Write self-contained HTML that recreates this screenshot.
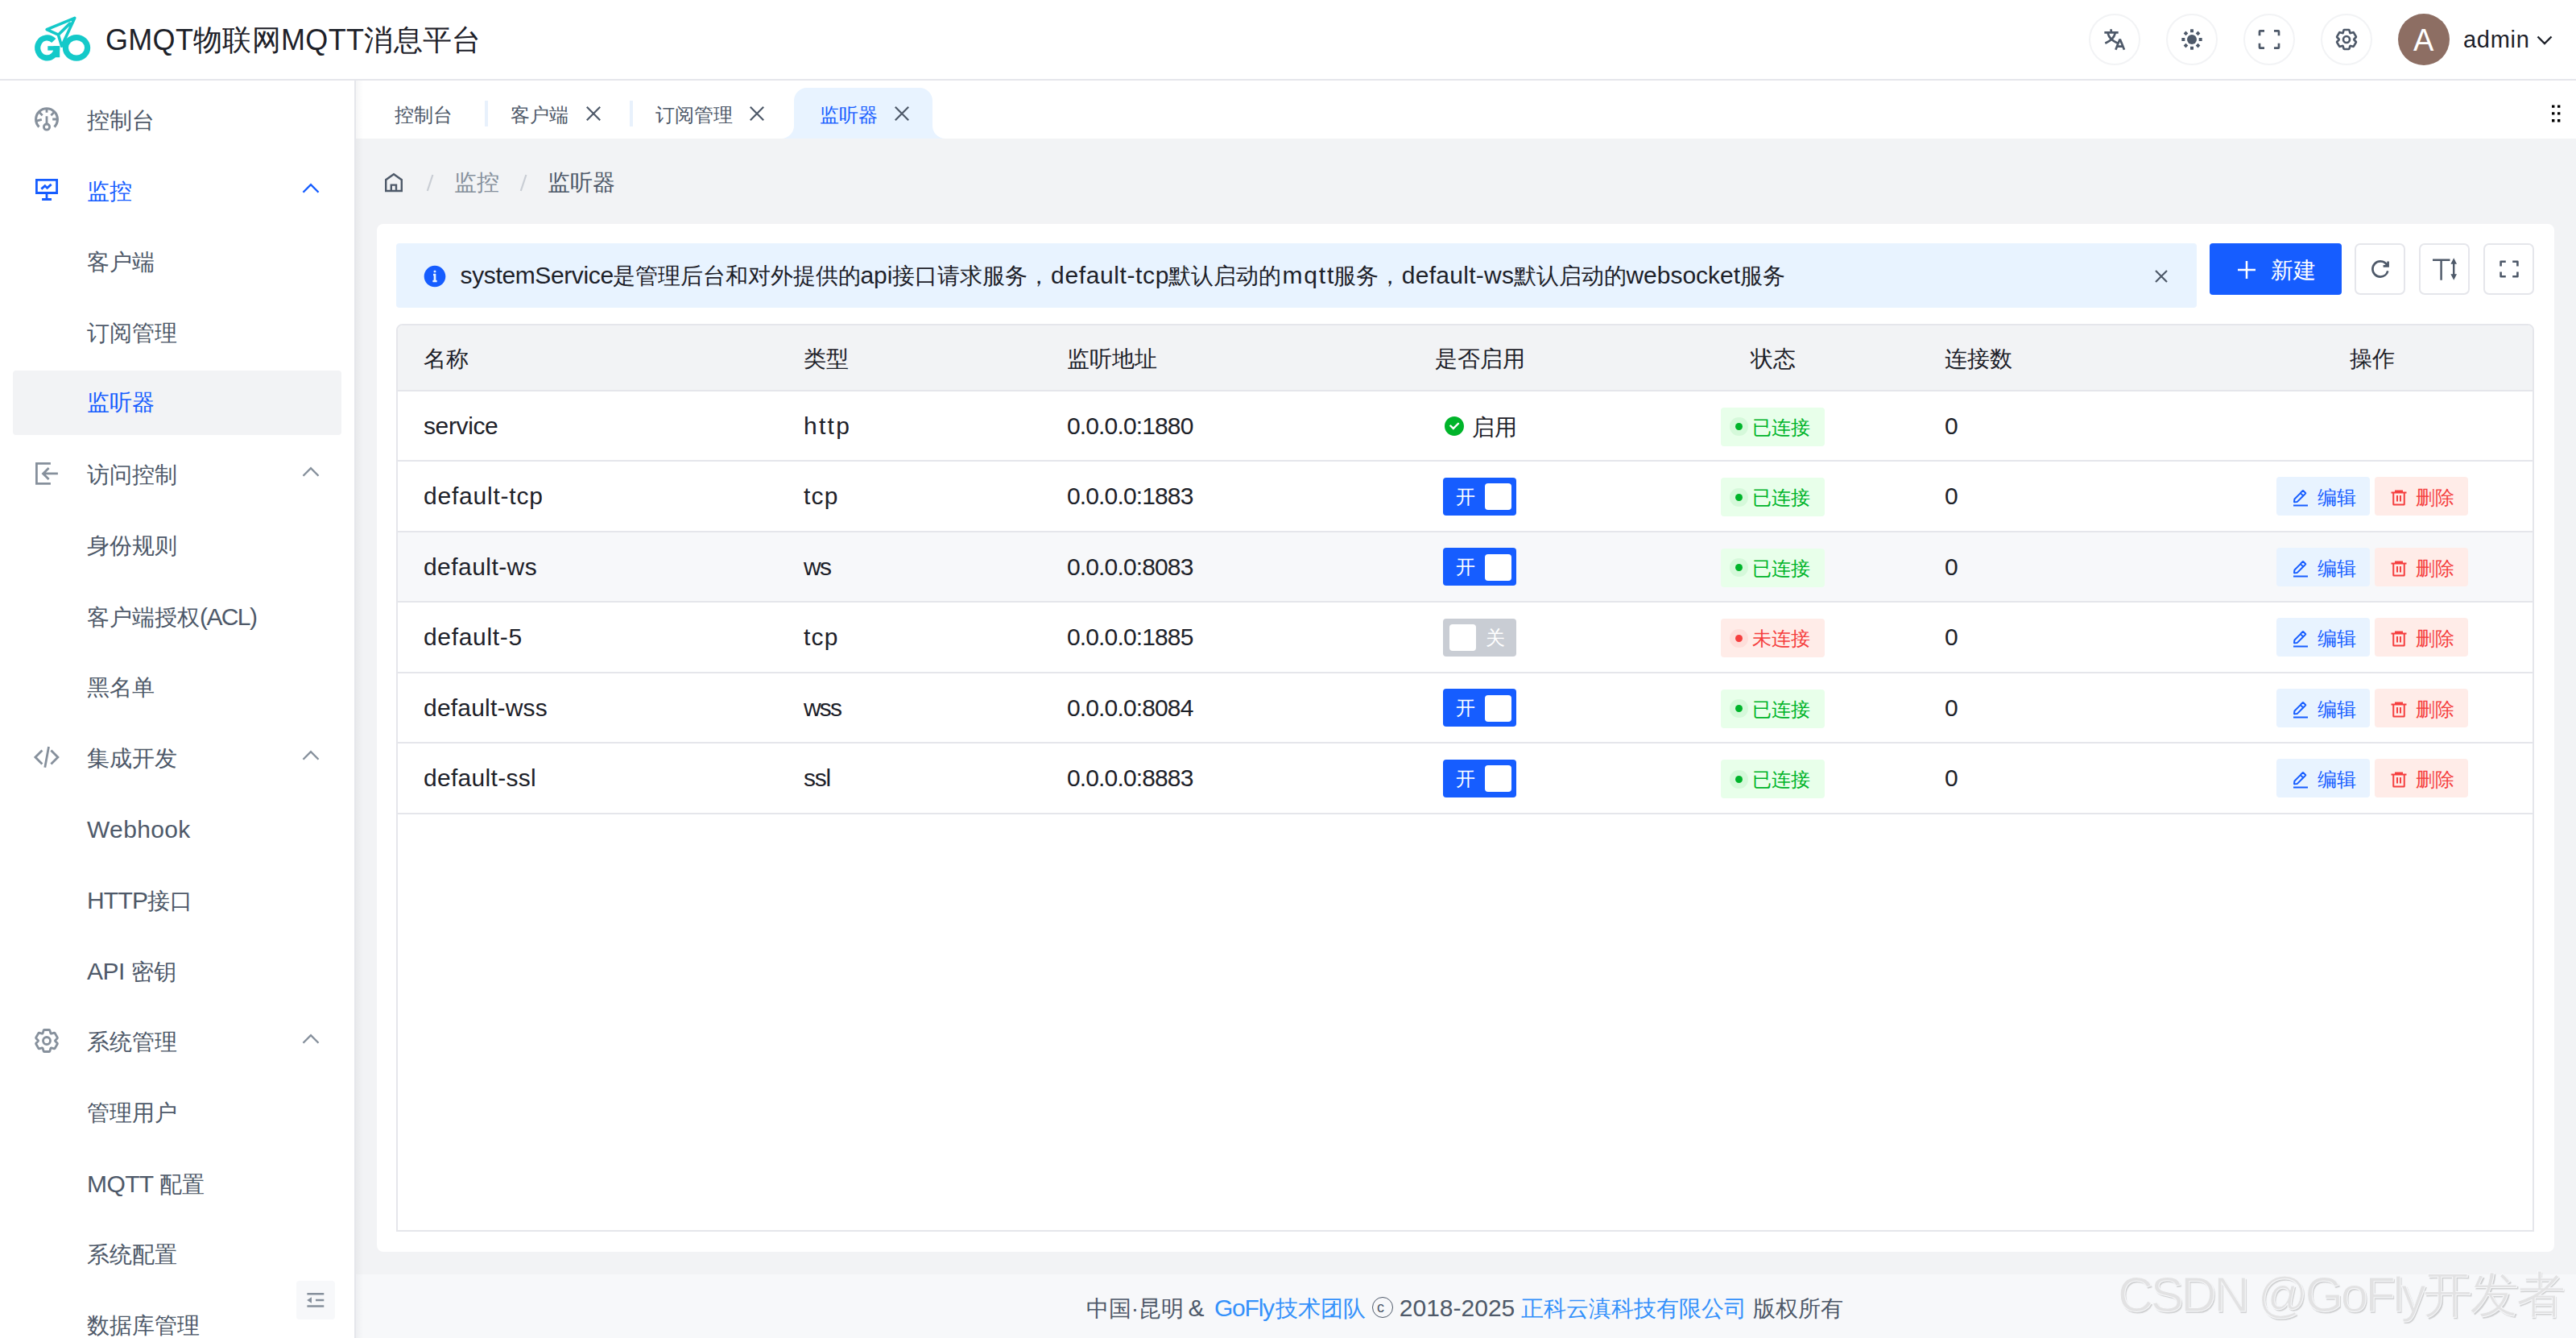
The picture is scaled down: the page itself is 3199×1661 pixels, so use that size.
<!DOCTYPE html>
<html><head><meta charset="utf-8">
<style>
*{box-sizing:border-box;margin:0;padding:0}
html,body{width:3199px;height:1661px;overflow:hidden;background:#fff}
body{position:relative;font-family:"Liberation Sans",sans-serif;color:#1D2129;font-size:28px}
.a{position:absolute}
.t{position:absolute;white-space:nowrap;line-height:1}
svg{position:absolute;overflow:visible}
.st{fill:none;stroke:currentColor}
/* header */
#hdr{left:0;top:0;width:3199px;height:100px;background:#fff;border-bottom:2px solid #E5E6EB}
.nbtn{position:absolute;top:17px;width:64px;height:64px;border-radius:50%;border:2px solid #F2F3F5;color:#4E5969}
/* sidebar */
#side{left:0;top:100px;width:442px;height:1561px;background:#fff;border-right:2px solid #E5E6EB;overflow:hidden}
.mi{position:absolute;left:16px;width:408px;height:80px;border-radius:4px}
.mt{position:absolute;left:92px;top:0;height:80px;line-height:80px;color:#4E5969;font-size:28px;white-space:nowrap}
.ic{color:#86909C}
/* main */
#main{left:442px;top:100px;width:2757px;height:1561px;background:#F2F3F5}
#tabs{left:0;top:0;width:2757px;height:72px;background:#fff}
.tab{position:absolute;top:30px;font-size:24px;color:#4E5969;line-height:1;white-space:nowrap}
#card{left:26px;top:178px;width:2704px;height:1275.5px;background:#fff;border-radius:8px}
#tbl{left:24px;top:124px;width:2655px;height:1127px;border:2px solid #E5E6EB;border-radius:8px 8px 0 0;overflow:hidden}
.row{position:absolute;left:0;width:2651px;border-bottom:2px solid #E5E6EB}
.cell{position:absolute;white-space:nowrap;font-size:28px;color:#1D2129}
.sw{position:absolute;left:1300px;width:91px;height:47px;border-radius:4px;background:#165DFF}
.sw .k{position:absolute;top:7.5px;width:33px;height:33px;border-radius:4px;background:#fff}
.sw .l{position:absolute;top:0;height:47px;line-height:47px;font-size:24px;color:#fff}
.tag{position:absolute;left:1644px;width:129px;height:48px;border-radius:4px;background:#E8FFEA;color:#00B42A;font-size:24px}
.tag .d{position:absolute;left:18px;top:19.5px;width:9px;height:9px;border-radius:50%;background:#00B42A;box-shadow:0 0 0 7px rgba(0,180,42,.08)}
.tag .l{position:absolute;left:39px;top:1px;height:48px;line-height:48px}
.eb{position:absolute;left:2334px;width:116px;height:48px;border-radius:4px;background:#E8F3FF;color:#165DFF;font-size:24px}
.db{position:absolute;left:2456px;width:116px;height:48px;border-radius:4px;background:#FFECE8;color:#F53F3F;font-size:24px}
.eb .l,.db .l{position:absolute;left:51px;top:2px;height:48px;line-height:48px}
#foot{left:0;top:1482px;width:2757px;height:79px;background:#F7F8FA}
</style></head><body>
<!-- HEADER -->
<div id="hdr" class="a">
  <svg class="a" style="left:0;top:0" width="130" height="98" viewBox="0 0 130 98">
    <g fill="none" stroke="#14C9C9" stroke-linejoin="round" stroke-linecap="round" stroke-width="3.6">
      <path d="M92.8 22.3 L58.1 36.6 L72.4 43.2 L76.6 57.2 Z M72.4 43.2 L86.8 29.1"/>
    </g>
    <g fill="none" stroke="#14C9C9" stroke-width="7.2">
      <ellipse cx="95" cy="59.3" rx="13.6" ry="12.8"/>
      <path d="M66.8 50.5 A11.8 12.5 0 1 0 70.3 59.3"/></g><g fill="#14C9C9"><rect x="59.3" y="57.2" width="14.9" height="5.4"/><rect x="66.4" y="57.2" width="7.8" height="14"/>
    </g>
  </svg>
  <div class="t" style="left:131px;top:32px;font-size:36px;letter-spacing:0.3px;color:#1D2129">GMQT物联网MQTT消息平台</div>
  <div class="nbtn" style="left:2594px"></div>
  <div class="nbtn" style="left:2690px"></div>
  <div class="nbtn" style="left:2786px"></div>
  <div class="nbtn" style="left:2882px"></div>
  <div class="a" style="left:2978px;top:17px;width:64px;height:64px;border-radius:50%;background:#8D6E63"></div>
  <div class="t" style="left:2997px;top:31px;font-size:38px;color:#fff">A</div>
  <div class="t" style="left:3059px;top:35px;font-size:29px;letter-spacing:0.7px;color:#1D2129">admin</div>
  <svg style="left:2610px;top:33px;color:#4E5969" width="32" height="32" viewBox="0 0 48 48"><g class="st" stroke-width="4"><path d="m42 43-2.385-6M26 43l2.384-6m11.231 0-.795-2-4.18-10h-1.28l-4.181 10-.795 2m11.231 0h-11.23M17 5l1 5M5 11h26M11 11s1.889 7.826 6.611 12.174C22.333 27.522 30 31 30 31"/><path d="M25.5 11s-1.889 7.826-6.611 12.174C14.167 27.522 6.5 31 6.5 31"/></g></svg>
  <svg style="left:2706px;top:33px" width="32" height="32" viewBox="0 0 48 48"><circle cx="24" cy="24" r="9" fill="#4E5969"/><path fill="#4E5969" d="M21 5.5a.5.5 0 0 1 .5-.5h5a.5.5 0 0 1 .5.5v5a.5.5 0 0 1-.5.5h-5a.5.5 0 0 1-.5-.5v-5ZM21 37.5a.5.5 0 0 1 .5-.5h5a.5.5 0 0 1 .5.5v5a.5.5 0 0 1-.5.5h-5a.5.5 0 0 1-.5-.5v-5ZM42.5 21a.5.5 0 0 1 .5.5v5a.5.5 0 0 1-.5.5h-5a.5.5 0 0 1-.5-.5v-5a.5.5 0 0 1 .5-.5h5ZM10.5 21a.5.5 0 0 1 .5.5v5a.5.5 0 0 1-.5.5h-5a.5.5 0 0 1-.5-.5v-5a.5.5 0 0 1 .5-.5h5ZM39.203 34.96a.5.5 0 0 1 0 .707l-3.536 3.536a.5.5 0 0 1-.707 0l-3.535-3.536a.5.5 0 0 1 0-.707l3.535-3.535a.5.5 0 0 1 .707 0l3.536 3.535ZM16.575 12.333a.5.5 0 0 1 0 .707l-3.535 3.535a.5.5 0 0 1-.707 0L8.797 13.04a.5.5 0 0 1 0-.707l3.536-3.536a.5.5 0 0 1 .707 0l3.535 3.536ZM13.04 39.203a.5.5 0 0 1-.707 0l-3.536-3.536a.5.5 0 0 1 0-.707l3.536-3.535a.5.5 0 0 1 .707 0l3.536 3.535a.5.5 0 0 1 0 .707l-3.536 3.536ZM35.668 16.575a.5.5 0 0 1-.708 0l-3.535-3.535a.5.5 0 0 1 0-.707l3.535-3.536a.5.5 0 0 1 .708 0l3.535 3.536a.5.5 0 0 1 0 .707l-3.535 3.535Z"/></svg>
  <svg style="left:2802px;top:33px;color:#4E5969" width="32" height="32" viewBox="0 0 48 48"><path class="st" stroke-width="4" d="M42 17V9a1 1 0 0 0-1-1h-8M6 17V9a1 1 0 0 1 1-1h8m27 23v8a1 1 0 0 1-1 1h-8M6 31v8a1 1 0 0 0 1 1h8"/></svg>
  <svg style="left:2898px;top:33px;color:#4E5969" width="32" height="32" viewBox="0 0 48 48"><g class="st" stroke-width="4"><path d="M18.797 6.732A1 1 0 0 1 19.76 6h8.48a1 1 0 0 1 .964.732l1.285 4.628a1 1 0 0 0 1.213.7l4.651-1.2a1 1 0 0 1 1.116.468l4.24 7.344a1 1 0 0 1-.153 1.2L38.193 23.3a1 1 0 0 0 0 1.402l3.364 3.427a1 1 0 0 1 .153 1.2l-4.24 7.344a1 1 0 0 1-1.116.468l-4.65-1.2a1 1 0 0 0-1.214.7l-1.285 4.628a1 1 0 0 1-.964.732h-8.48a1 1 0 0 1-.963-.732L17.51 36.64a1 1 0 0 0-1.213-.7l-4.65 1.2a1 1 0 0 1-1.116-.468l-4.24-7.344a1 1 0 0 1 .153-1.2L9.809 24.7a1 1 0 0 0 0-1.402l-3.364-3.427a1 1 0 0 1-.153-1.2l4.24-7.344a1 1 0 0 1 1.116-.468l4.65 1.2a1 1 0 0 0 1.213-.7l1.286-4.628Z"/><path d="M30 24a6 6 0 1 1-12 0 6 6 0 0 1 12 0Z"/></g></svg>
  <svg style="left:0;top:0;color:#1D2129" width="1" height="1"><path class="st" stroke-width="2.4" d="M3151.5 45.5 L3160 54 L3168.5 45.5"/></svg>
</div>
<!-- SIDEBAR -->
<div id="side" class="a">
<div class="mi" style="top:10px;"><div class="mt" style="color:#4E5969">控制台</div></div>
<svg style="left:58px;top:48px;color:#86909C" width="1" height="1"><g class="st" stroke-width="2.8" fill="none"><path stroke-width="3.1" d="M-9.55 9.55 A13.4 13.4 0 1 1 9.55 9.55"/><path d="M0 -12.5 V-8.2 M-9 -8.4 L-5.3 -4.8 M9 -8.4 L5.3 -4.8 M-12.5 2.2 L-6.2 0.3 M12.5 0 H7.2 M0 -3.8 V6"/><circle cx="0" cy="9.6" r="3.6"/></g></svg>
<div class="mi" style="top:98px;"><div class="mt" style="color:#165DFF">监控</div></div>
<svg style="left:58px;top:136px;color:#165DFF" width="1" height="1"><g class="st" stroke-width="2.8" fill="none"><path d="M-12.6 -12.7 H12.6 V3.5 H-12.6 Z"/><path d="M0 3.5 V11.5 M-5.9 11.5 H6"/><path d="M-6.7 -1.4 L-2.2 -5.4 L0.6 -2.6 L5.7 -7.1"/></g></svg>
<svg style="left:386px;top:134px;color:#165DFF" width="1" height="1"><path class="st" stroke-width="2.45" d="M9.5 4.75 L0 -4.75 L-9.5 4.75"/></svg>
<div class="mi" style="top:186px;"><div class="mt" style="color:#4E5969">客户端</div></div>
<div class="mi" style="top:274px;"><div class="mt" style="color:#4E5969">订阅管理</div></div>
<div class="mi" style="top:360px;background:#F2F3F5;"><div class="mt" style="color:#165DFF">监听器</div></div>
<div class="mi" style="top:450px;"><div class="mt" style="color:#4E5969">访问控制</div></div>
<svg style="left:58px;top:488px;color:#86909C" width="1" height="1"><g class="st" stroke-width="2.8" fill="none"><path d="M4.9 -12.6 H-12.6 V12.4 H4.9"/><path d="M13.9 -0.1 H-4.5 M2.6 -7 L-4.5 -0.1 L2.6 6.9"/></g></svg>
<svg style="left:386px;top:486px;color:#86909C" width="1" height="1"><path class="st" stroke-width="2.45" d="M9.5 4.75 L0 -4.75 L-9.5 4.75"/></svg>
<div class="mi" style="top:538px;"><div class="mt" style="color:#4E5969">身份规则</div></div>
<div class="mi" style="top:626px;"><div class="mt" style="color:#4E5969">客户端授权<span style="font-size:30px;letter-spacing:-1.6px">(ACL)</span></div></div>
<div class="mi" style="top:714px;"><div class="mt" style="color:#4E5969">黑名单</div></div>
<div class="mi" style="top:802px;"><div class="mt" style="color:#4E5969">集成开发</div></div>
<svg style="left:58px;top:840px;color:#86909C" width="1" height="1"><g class="st" stroke-width="2.8" fill="none"><path d="M-5.6 -8.5 L-14.1 0 L-5.6 8.5 M5.4 -8.5 L13.9 0 L5.4 8.5 M2.5 -13 L-2.2 12.7"/></g></svg>
<svg style="left:386px;top:838px;color:#86909C" width="1" height="1"><path class="st" stroke-width="2.45" d="M9.5 4.75 L0 -4.75 L-9.5 4.75"/></svg>
<div class="mi" style="top:890px;"><div class="mt" style="color:#4E5969;font-size:30px;letter-spacing:0.35px">Webhook</div></div>
<div class="mi" style="top:978px;"><div class="mt" style="color:#4E5969"><span style="font-size:30px;letter-spacing:-0.8px">HTTP</span>接口</div></div>
<div class="mi" style="top:1066px;"><div class="mt" style="color:#4E5969"><span style="font-size:30px;letter-spacing:-0.5px">API </span>密钥</div></div>
<div class="mi" style="top:1154px;"><div class="mt" style="color:#4E5969">系统管理</div></div>
<svg style="left:58px;top:1192px;color:#86909C" width="1" height="1"><g class="st" stroke-width="2.8" fill="none"><g transform="translate(-18 -18) scale(0.75)" stroke-width="3.73"><path d="M18.797 6.732A1 1 0 0 1 19.76 6h8.48a1 1 0 0 1 .964.732l1.285 4.628a1 1 0 0 0 1.213.7l4.651-1.2a1 1 0 0 1 1.116.468l4.24 7.344a1 1 0 0 1-.153 1.2L38.193 23.3a1 1 0 0 0 0 1.402l3.364 3.427a1 1 0 0 1 .153 1.2l-4.24 7.344a1 1 0 0 1-1.116.468l-4.65-1.2a1 1 0 0 0-1.214.7l-1.285 4.628a1 1 0 0 1-.964.732h-8.48a1 1 0 0 1-.963-.732L17.51 36.64a1 1 0 0 0-1.213-.7l-4.65 1.2a1 1 0 0 1-1.116-.468l-4.24-7.344a1 1 0 0 1 .153-1.2L9.809 24.7a1 1 0 0 0 0-1.402l-3.364-3.427a1 1 0 0 1-.153-1.2l4.24-7.344a1 1 0 0 1 1.116-.468l4.65 1.2a1 1 0 0 0 1.213-.7l1.286-4.628Z"/><path d="M30 24a6 6 0 1 1-12 0 6 6 0 0 1 12 0Z"/></g></g></svg>
<svg style="left:386px;top:1190px;color:#86909C" width="1" height="1"><path class="st" stroke-width="2.45" d="M9.5 4.75 L0 -4.75 L-9.5 4.75"/></svg>
<div class="mi" style="top:1242px;"><div class="mt" style="color:#4E5969">管理用户</div></div>
<div class="mi" style="top:1330px;"><div class="mt" style="color:#4E5969"><span style="font-size:30px;letter-spacing:-0.6px">MQTT </span>配置</div></div>
<div class="mi" style="top:1418px;"><div class="mt" style="color:#4E5969">系统配置</div></div>
<div class="mi" style="top:1506px;"><div class="mt" style="color:#4E5969">数据库管理</div></div>
<div class="a" style="left:368px;top:1490px;width:48px;height:48px;border-radius:4px;background:#F7F8FA"></div>
<svg style="left:392px;top:1514px;color:#86909C" width="1" height="1"><g class="st" stroke-width="2.6"><path d="M-10.6 -7.8 H10.3 M0 0 H10.3 M-10.6 7.5 H10.3"/></g><path fill="#86909C" d="M-10.8 0 L-5 -3.8 V3.8 Z"/></svg>
</div>
<!-- MAIN -->
<div id="main" class="a">

  <div id="tabs" class="a">
    <div class="t" style="left:48px;top:31px;font-size:24px;color:#4E5969">控制台</div>
    <div class="a" style="left:160px;top:25px;width:4px;height:32px;background:#E8F1FC"></div>
    <div class="t" style="left:192px;top:31px;font-size:24px;color:#4E5969">客户端</div>
    <svg style="left:294.5px;top:41px;color:#4E5969" width="1" height="1"><path class="st" stroke-width="2.2" d="M-8.2 -8.2 L8.2 8.2 M8.2 -8.2 L-8.2 8.2"/></svg>
    <div class="a" style="left:340px;top:25px;width:4px;height:32px;background:#E8F1FC"></div>
    <div class="t" style="left:372px;top:31px;font-size:24px;color:#4E5969">订阅管理</div>
    <svg style="left:497.5px;top:41px;color:#4E5969" width="1" height="1"><path class="st" stroke-width="2.2" d="M-8.2 -8.2 L8.2 8.2 M8.2 -8.2 L-8.2 8.2"/></svg>
    <svg style="left:528px;top:9px" width="204" height="63"><path fill="#E8F3FF" d="M0 63 A16 16 0 0 0 16 47 V16 A16 16 0 0 1 32 0 H172 A16 16 0 0 1 188 16 V47 A16 16 0 0 0 204 63 Z"/></svg>
    <div class="t" style="left:576px;top:31px;font-size:24px;color:#165DFF">监听器</div>
    <svg style="left:678px;top:41px;color:#4E5969" width="1" height="1"><path class="st" stroke-width="2.2" d="M-8.2 -8.2 L8.2 8.2 M8.2 -8.2 L-8.2 8.2"/></svg>
    <svg style="left:2726px;top:28px" width="16" height="26"><path fill="#000" d="M1 2.4h3.4v3.4H1zM8 2.4h3.4v3.4H8zM1 11.2h3.4v3.4H1zM8 11.2h3.4v3.4H8zM1 20h3.4v3.4H1zM8 20h3.4v3.4H8z"/></svg>
  </div>
  <!-- breadcrumb -->
  <svg style="left:36px;top:115px;color:#4E5969" width="24" height="24"><path class="st" stroke-width="2.4" stroke-linejoin="miter" d="M1.2 22 V8.2 L11 1.3 L20.8 8.2 V22 Z M7.8 22 V14.6 H14 V22"/></svg>
  <svg style="left:85px;top:116px" width="12" height="22"><path stroke="#C9CDD4" stroke-width="2.2" d="M10.4 1 L3.8 21"/></svg>
  <div class="t" style="left:122px;top:113px;font-size:28px;color:#86909C">监控</div>
  <svg style="left:201px;top:116px" width="12" height="22"><path stroke="#C9CDD4" stroke-width="2.2" d="M10.4 1 L3.8 21"/></svg>
  <div class="t" style="left:238px;top:113px;font-size:28px;color:#4E5969">监听器</div>
  <div id="card" class="a">

    <div class="a" style="left:24px;top:24px;width:2236px;height:80px;background:#E8F3FF;border-radius:4px"></div>
    <svg style="left:72px;top:65px" width="1" height="1"><g transform="translate(-16 -16) scale(0.6667)"><path fill="#165DFF" fill-rule="evenodd" d="M24 44c11.046 0 20-8.954 20-20S35.046 4 24 4 4 12.954 4 24s8.954 20 20 20Zm2-30a1 1 0 0 0-1-1h-2a1 1 0 0 0-1 1v2a1 1 0 0 0 1 1h2a1 1 0 0 0 1-1v-2Zm0 17h1a1 1 0 0 1 1 1v2a1 1 0 0 1-1 1h-6a1 1 0 0 1-1-1v-2a1 1 0 0 1 1-1h1v-8a1 1 0 0 1-1-1v-2a1 1 0 0 1 1-1h3a1 1 0 0 1 1 1v11Z"/></g></svg>
    <div class="t" style="left:103.6px;top:49.3px;font-size:30px;color:#1D2129;letter-spacing:-0.38px">systemService</div>
    <div class="t" style="left:292.5px;top:51px;font-size:28px;color:#1D2129">是管理后台和对外提供的</div>
    <div class="t" style="left:600.4px;top:49.3px;font-size:30px;color:#1D2129;letter-spacing:0px">api</div>
    <div class="t" style="left:639.7px;top:51px;font-size:28px;color:#1D2129">接口请求服务，</div>
    <div class="t" style="left:837.1px;top:49.3px;font-size:30px;color:#1D2129;letter-spacing:0.62px">default-tcp</div>
    <div class="t" style="left:982.5px;top:51px;font-size:28px;color:#1D2129">默认启动的</div>
    <div class="t" style="left:1124.4px;top:49.3px;font-size:30px;color:#1D2129;letter-spacing:1.87px">mqtt</div>
    <div class="t" style="left:1188.0px;top:51px;font-size:28px;color:#1D2129">服务，</div>
    <div class="t" style="left:1272.8px;top:49.3px;font-size:30px;color:#1D2129;letter-spacing:0.28px">default-ws</div>
    <div class="t" style="left:1411.5px;top:51px;font-size:28px;color:#1D2129">默认启动的</div>
    <div class="t" style="left:1551.4px;top:49.3px;font-size:30px;color:#1D2129;letter-spacing:0px">websocket</div>
    <div class="t" style="left:1692.5px;top:51px;font-size:28px;color:#1D2129">服务</div>
    <svg style="left:2216px;top:65px;color:#4E5969" width="1" height="1"><path class="st" stroke-width="2.2" d="M-7 -7 L7 7 M7 -7 L-7 7"/></svg>
    <div class="a" style="left:2276px;top:24px;width:164px;height:64px;background:#165DFF;border-radius:4px"></div>
    <svg style="left:2322px;top:57px;color:#fff" width="1" height="1"><path class="st" stroke-width="2.5" d="M-11 0 H11 M0 -11 V11"/></svg>
    <div class="t" style="left:2352px;top:44px;font-size:28px;color:#fff">新建</div>
    <div class="a" style="left:2456px;top:24px;width:63px;height:64px;border:2px solid #E5E6EB;border-radius:7px"></div>
    <div class="a" style="left:2536px;top:24px;width:63px;height:64px;border:2px solid #E5E6EB;border-radius:7px"></div>
    <div class="a" style="left:2616px;top:24px;width:63px;height:64px;border:2px solid #E5E6EB;border-radius:7px"></div>
    <svg style="left:2488px;top:56px;color:#4E5969" width="1" height="1"><g transform="translate(-14.4 -14.4) scale(0.6)" class="st" stroke-width="4.4"><path d="M38.837 18C36.463 12.136 30.715 8 24 8 15.163 8 8 15.163 8 24s7.163 16 16 16c7.455 0 13.72-5.1 15.496-12M40 8v10H30"/></g></svg>
    <svg style="left:2568px;top:56px;color:#4E5969" width="1" height="1"><path class="st" stroke-width="2.4" d="M-15 -11.3 H6.5 M-4.4 -11.3 V13.7 M11.2 -7 V7"/><path fill="#4E5969" d="M11.2 -13.7 L15 -6.2 H7.4 Z M11.2 13.7 L15 6.2 H7.4 Z"/></svg>
    <svg style="left:2648px;top:56px;color:#4E5969" width="1" height="1"><path class="st" stroke-width="2.6" stroke-linejoin="round" d="M-10.4 -3.6 V-9.2 H-4.2 M4.2 -9.2 H10.4 V-3.6 M10.4 3.6 V9.2 H4.2 M-4.2 9.2 H-10.4 V3.6"/></svg>
    <div id="tbl" class="a">
<div class="a" style="left:0;top:0;width:2651px;height:80px;background:#F2F3F5"></div>
<div class="a" style="left:0;top:80px;width:2651px;height:2px;background:#E5E6EB"></div>
<div class="a" style="left:0;top:167px;width:2651px;height:2px;background:#E5E6EB"></div>
<div class="a" style="left:0;top:255px;width:2651px;height:2px;background:#E5E6EB"></div>
<div class="a" style="left:0;top:342px;width:2651px;height:2px;background:#E5E6EB"></div>
<div class="a" style="left:0;top:430px;width:2651px;height:2px;background:#E5E6EB"></div>
<div class="a" style="left:0;top:517px;width:2651px;height:2px;background:#E5E6EB"></div>
<div class="a" style="left:0;top:605px;width:2651px;height:2px;background:#E5E6EB"></div>
<div class="a" style="left:0;top:257px;width:2651px;height:85px;background:#F7F8FA"></div>
<div class="t" style="left:32px;top:28.0px;font-size:28px;color:#1D2129;">名称</div>
<div class="t" style="left:504px;top:28.0px;font-size:28px;color:#1D2129;">类型</div>
<div class="t" style="left:831px;top:28.0px;font-size:28px;color:#1D2129;">监听地址</div>
<div class="t" style="left:1044px;width:600px;text-align:center;top:28.0px;font-size:28px;color:#1D2129">是否启用</div>
<div class="t" style="left:1407.5px;width:600px;text-align:center;top:28.0px;font-size:28px;color:#1D2129">状态</div>
<div class="t" style="left:1921px;top:28.0px;font-size:28px;color:#1D2129;">连接数</div>
<div class="t" style="left:2152px;width:600px;text-align:center;top:28.0px;font-size:28px;color:#1D2129">操作</div>
<div class="t" style="left:32px;top:109.5px;font-size:30px;color:#1D2129;letter-spacing:-0.38px;">service</div>
<div class="t" style="left:504px;top:109.5px;font-size:30px;color:#1D2129;letter-spacing:2.27px;">http</div>
<div class="t" style="left:831px;top:109.5px;font-size:30px;color:#1D2129;letter-spacing:-0.86px;">0.0.0.0:1880</div>
<div class="t" style="left:1921px;top:109.5px;font-size:30px;color:#1D2129;">0</div>
<svg style="left:1311.7px;top:124.5px" width="1" height="1"><g transform="translate(-14.4 -14.4) scale(0.6)"><path fill="#00B42A" fill-rule="evenodd" d="M24 44c11.046 0 20-8.954 20-20S35.046 4 24 4 4 12.954 4 24s8.954 20 20 20Zm10.207-24.379a1 1 0 0 0 0-1.414l-1.414-1.414a1 1 0 0 0-1.414 0L22 26.172l-4.878-4.88a1 1 0 0 0-1.415 0l-1.414 1.415a1 1 0 0 0 0 1.414l7 7a1 1 0 0 0 1.414 0l11.5-11.5Z"/></g></svg>
<div class="t" style="left:1334px;top:112.5px;font-size:28px;color:#1D2129;">启用</div>
<div class="tag" style="left:1643px;top:101.5px"><div class="d"></div><div class="l">已连接</div></div>
<div class="t" style="left:32px;top:197.0px;font-size:30px;color:#1D2129;letter-spacing:0.78px;">default-tcp</div>
<div class="t" style="left:504px;top:197.0px;font-size:30px;color:#1D2129;letter-spacing:1.2px;">tcp</div>
<div class="t" style="left:831px;top:197.0px;font-size:30px;color:#1D2129;letter-spacing:-0.86px;">0.0.0.0:1883</div>
<div class="t" style="left:1921px;top:197.0px;font-size:30px;color:#1D2129;">0</div>
<div class="sw" style="left:1298px;top:188.5px;background:#165DFF"><div class="k" style="left:51.5px"></div><div class="l" style="left:16px">开</div></div>
<div class="tag" style="left:1643px;top:189.0px"><div class="d"></div><div class="l">已连接</div></div>
<div class="eb" style="left:2333px;top:188.0px"><svg style="left:30px;top:26px;color:#165DFF" width="1" height="1"><g transform="translate(-12 -12) scale(0.5)" class="st" stroke-width="4"><path d="m30.48 19.038 5.733-5.734a1 1 0 0 0 0-1.414l-5.586-5.586a1 1 0 0 0-1.414 0l-5.734 5.734m6.999 6.999L15.763 33.754a1 1 0 0 1-.59.286l-6.048.708a1 1 0 0 1-1.103-1.104l.701-6.049a1 1 0 0 1 .287-.59l14.712-14.703m6.999 6.999-6.999-6.999M6.025 42.877H42"/></g></svg><div class="l">编辑</div></div>
<div class="db" style="left:2455px;top:188.0px"><svg style="left:29.5px;top:26px;color:#F53F3F" width="1" height="1"><g transform="translate(-12 -12) scale(0.5)" class="st" stroke-width="4"><path d="M5 11h5.5m0 0v29a1 1 0 0 0 1 1h25a1 1 0 0 0 1-1V11m-27 0H16m21.5 0H43m-5.5 0H32m-16 0V7h16v4m-16 0h16M20 18v15m8-15v15"/></g></svg><div class="l">删除</div></div>
<div class="t" style="left:32px;top:284.5px;font-size:30px;color:#1D2129;letter-spacing:0.44px;">default-ws</div>
<div class="t" style="left:504px;top:284.5px;font-size:30px;color:#1D2129;letter-spacing:-1.6px;">ws</div>
<div class="t" style="left:831px;top:284.5px;font-size:30px;color:#1D2129;letter-spacing:-0.86px;">0.0.0.0:8083</div>
<div class="t" style="left:1921px;top:284.5px;font-size:30px;color:#1D2129;">0</div>
<div class="sw" style="left:1298px;top:276.0px;background:#165DFF"><div class="k" style="left:51.5px"></div><div class="l" style="left:16px">开</div></div>
<div class="tag" style="left:1643px;top:276.5px"><div class="d"></div><div class="l">已连接</div></div>
<div class="eb" style="left:2333px;top:275.5px"><svg style="left:30px;top:26px;color:#165DFF" width="1" height="1"><g transform="translate(-12 -12) scale(0.5)" class="st" stroke-width="4"><path d="m30.48 19.038 5.733-5.734a1 1 0 0 0 0-1.414l-5.586-5.586a1 1 0 0 0-1.414 0l-5.734 5.734m6.999 6.999L15.763 33.754a1 1 0 0 1-.59.286l-6.048.708a1 1 0 0 1-1.103-1.104l.701-6.049a1 1 0 0 1 .287-.59l14.712-14.703m6.999 6.999-6.999-6.999M6.025 42.877H42"/></g></svg><div class="l">编辑</div></div>
<div class="db" style="left:2455px;top:275.5px"><svg style="left:29.5px;top:26px;color:#F53F3F" width="1" height="1"><g transform="translate(-12 -12) scale(0.5)" class="st" stroke-width="4"><path d="M5 11h5.5m0 0v29a1 1 0 0 0 1 1h25a1 1 0 0 0 1-1V11m-27 0H16m21.5 0H43m-5.5 0H32m-16 0V7h16v4m-16 0h16M20 18v15m8-15v15"/></g></svg><div class="l">删除</div></div>
<div class="t" style="left:32px;top:372.0px;font-size:30px;color:#1D2129;letter-spacing:0.67px;">default-5</div>
<div class="t" style="left:504px;top:372.0px;font-size:30px;color:#1D2129;letter-spacing:1.2px;">tcp</div>
<div class="t" style="left:831px;top:372.0px;font-size:30px;color:#1D2129;letter-spacing:-0.86px;">0.0.0.0:1885</div>
<div class="t" style="left:1921px;top:372.0px;font-size:30px;color:#1D2129;">0</div>
<div class="sw" style="left:1298px;top:363.5px;background:#C9CDD4"><div class="k" style="left:8px"></div><div class="l" style="left:53px">关</div></div>
<div class="tag" style="left:1643px;top:364.0px;background:#FFECE8;color:#F53F3F"><div class="d" style="background:#F53F3F;box-shadow:0 0 0 7px rgba(245,63,63,.08)"></div><div class="l">未连接</div></div>
<div class="eb" style="left:2333px;top:363.0px"><svg style="left:30px;top:26px;color:#165DFF" width="1" height="1"><g transform="translate(-12 -12) scale(0.5)" class="st" stroke-width="4"><path d="m30.48 19.038 5.733-5.734a1 1 0 0 0 0-1.414l-5.586-5.586a1 1 0 0 0-1.414 0l-5.734 5.734m6.999 6.999L15.763 33.754a1 1 0 0 1-.59.286l-6.048.708a1 1 0 0 1-1.103-1.104l.701-6.049a1 1 0 0 1 .287-.59l14.712-14.703m6.999 6.999-6.999-6.999M6.025 42.877H42"/></g></svg><div class="l">编辑</div></div>
<div class="db" style="left:2455px;top:363.0px"><svg style="left:29.5px;top:26px;color:#F53F3F" width="1" height="1"><g transform="translate(-12 -12) scale(0.5)" class="st" stroke-width="4"><path d="M5 11h5.5m0 0v29a1 1 0 0 0 1 1h25a1 1 0 0 0 1-1V11m-27 0H16m21.5 0H43m-5.5 0H32m-16 0V7h16v4m-16 0h16M20 18v15m8-15v15"/></g></svg><div class="l">删除</div></div>
<div class="t" style="left:32px;top:459.5px;font-size:30px;color:#1D2129;letter-spacing:0.2px;">default-wss</div>
<div class="t" style="left:504px;top:459.5px;font-size:30px;color:#1D2129;letter-spacing:-1.8px;">wss</div>
<div class="t" style="left:831px;top:459.5px;font-size:30px;color:#1D2129;letter-spacing:-0.86px;">0.0.0.0:8084</div>
<div class="t" style="left:1921px;top:459.5px;font-size:30px;color:#1D2129;">0</div>
<div class="sw" style="left:1298px;top:451.0px;background:#165DFF"><div class="k" style="left:51.5px"></div><div class="l" style="left:16px">开</div></div>
<div class="tag" style="left:1643px;top:451.5px"><div class="d"></div><div class="l">已连接</div></div>
<div class="eb" style="left:2333px;top:450.5px"><svg style="left:30px;top:26px;color:#165DFF" width="1" height="1"><g transform="translate(-12 -12) scale(0.5)" class="st" stroke-width="4"><path d="m30.48 19.038 5.733-5.734a1 1 0 0 0 0-1.414l-5.586-5.586a1 1 0 0 0-1.414 0l-5.734 5.734m6.999 6.999L15.763 33.754a1 1 0 0 1-.59.286l-6.048.708a1 1 0 0 1-1.103-1.104l.701-6.049a1 1 0 0 1 .287-.59l14.712-14.703m6.999 6.999-6.999-6.999M6.025 42.877H42"/></g></svg><div class="l">编辑</div></div>
<div class="db" style="left:2455px;top:450.5px"><svg style="left:29.5px;top:26px;color:#F53F3F" width="1" height="1"><g transform="translate(-12 -12) scale(0.5)" class="st" stroke-width="4"><path d="M5 11h5.5m0 0v29a1 1 0 0 0 1 1h25a1 1 0 0 0 1-1V11m-27 0H16m21.5 0H43m-5.5 0H32m-16 0V7h16v4m-16 0h16M20 18v15m8-15v15"/></g></svg><div class="l">删除</div></div>
<div class="t" style="left:32px;top:547.0px;font-size:30px;color:#1D2129;letter-spacing:0.3px;">default-ssl</div>
<div class="t" style="left:504px;top:547.0px;font-size:30px;color:#1D2129;letter-spacing:-1.3px;">ssl</div>
<div class="t" style="left:831px;top:547.0px;font-size:30px;color:#1D2129;letter-spacing:-0.86px;">0.0.0.0:8883</div>
<div class="t" style="left:1921px;top:547.0px;font-size:30px;color:#1D2129;">0</div>
<div class="sw" style="left:1298px;top:538.5px;background:#165DFF"><div class="k" style="left:51.5px"></div><div class="l" style="left:16px">开</div></div>
<div class="tag" style="left:1643px;top:539.0px"><div class="d"></div><div class="l">已连接</div></div>
<div class="eb" style="left:2333px;top:538.0px"><svg style="left:30px;top:26px;color:#165DFF" width="1" height="1"><g transform="translate(-12 -12) scale(0.5)" class="st" stroke-width="4"><path d="m30.48 19.038 5.733-5.734a1 1 0 0 0 0-1.414l-5.586-5.586a1 1 0 0 0-1.414 0l-5.734 5.734m6.999 6.999L15.763 33.754a1 1 0 0 1-.59.286l-6.048.708a1 1 0 0 1-1.103-1.104l.701-6.049a1 1 0 0 1 .287-.59l14.712-14.703m6.999 6.999-6.999-6.999M6.025 42.877H42"/></g></svg><div class="l">编辑</div></div>
<div class="db" style="left:2455px;top:538.0px"><svg style="left:29.5px;top:26px;color:#F53F3F" width="1" height="1"><g transform="translate(-12 -12) scale(0.5)" class="st" stroke-width="4"><path d="M5 11h5.5m0 0v29a1 1 0 0 0 1 1h25a1 1 0 0 0 1-1V11m-27 0H16m21.5 0H43m-5.5 0H32m-16 0V7h16v4m-16 0h16M20 18v15m8-15v15"/></g></svg><div class="l">删除</div></div>
</div>
  </div>
  <div id="foot" class="a">
    <div class="t" style="left:906.8px;top:28.5px;font-size:28px;color:#4E5969">中国·昆明</div>
    <div class="t" style="left:1033.5px;top:26.8px;font-size:30px;color:#4E5969;letter-spacing:0px">&amp;</div>
    <div class="t" style="left:1065.9px;top:26.8px;font-size:30px;color:#3491FA;letter-spacing:-1.2px">GoFly</div>
    <div class="t" style="left:1142.3px;top:28.5px;font-size:28px;color:#3491FA">技术团队</div>
    <div class="t" style="left:1295.8px;top:26.8px;font-size:30px;color:#4E5969;letter-spacing:0px">2018-2025</div>
    <div class="t" style="left:1447.2px;top:28.5px;font-size:28px;color:#3491FA">正科云滇科技有限公司</div>
    <div class="t" style="left:1735.2px;top:28.5px;font-size:28px;color:#4E5969">版权所有</div>
    <div class="a" style="left:1261.5px;top:28px;width:26px;height:26px;border:1.6px solid #4E5969;border-radius:50%"></div>
    <div class="t" style="left:1268.0px;top:32px;font-size:18px;color:#4E5969">c</div>
  </div>
</div>
<div class="a" style="left:442px;top:100px;width:9px;height:1561px;background:linear-gradient(to right,rgba(29,33,41,.045),rgba(29,33,41,0))"></div>
<div class="t" style="left:2630px;top:1577px;font-size:61px;letter-spacing:-3.2px;color:#E2E2E3;-webkit-text-stroke:1px #F7F8FA;text-shadow:1.5px 1.5px 1px rgba(0,0,0,.17)">CSDN @GoFly开发者</div>
</body></html>
